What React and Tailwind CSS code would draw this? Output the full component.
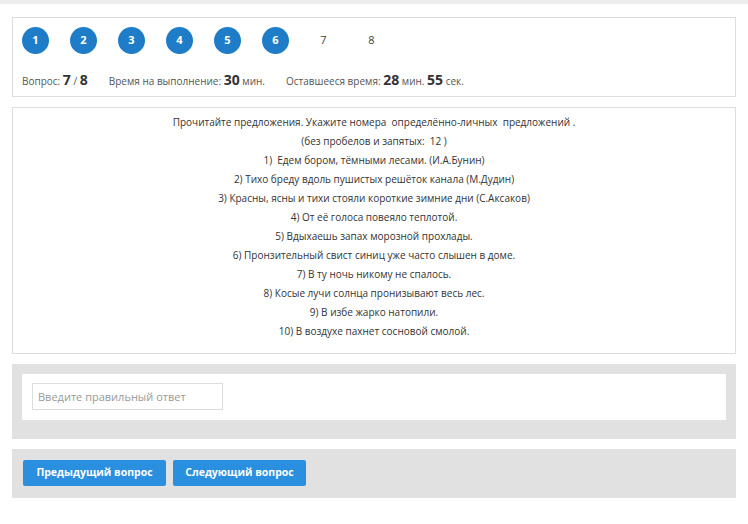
import React from "react";

const lines = [
  "Прочитайте предложения. Укажите номера  определённо-личных  предложений .",
  "(без пробелов и запятых:  12 )",
  "1)  Едем бором, тёмными лесами. (И.А.Бунин)",
  "2) Тихо бреду вдоль пушистых решёток канала (М.Дудин)",
  "3) Красны, ясны и тихи стояли короткие зимние дни (С.Аксаков)",
  "4) От её голоса повеяло теплотой.",
  "5) Вдыхаешь запах морозной прохлады.",
  "6) Пронзительный свист синиц уже часто слышен в доме.",
  "7) В ту ночь никому не спалось.",
  "8) Косые лучи солнца пронизывают весь лес.",
  "9) В избе жарко натопили.",
  "10) В воздухе пахнет сосновой смолой.",
];

function Step({ n, done }) {
  return (
    <div
      className={
        done
          ? "w-[27px] h-[27px] rounded-full bg-[#1f7cc6] text-white text-[11px] font-bold flex items-center justify-center"
          : "w-[27px] h-[27px] flex items-center justify-center text-[11px] text-[#444]"
      }
    >
      {n}
    </div>
  );
}

export default function App() {
  return (
    <div className="min-h-[524px] bg-white text-[#444]" style={{ fontFamily: "'Open Sans', 'Noto Sans', sans-serif" }}>
      <div className="h-[4px] bg-[#ececec]" />
      <div className="px-[12px] pt-[13px] flex flex-col">
        {/* progress */}
        <div className="border border-[#ddd] h-[80px] pl-[9px] pt-[9px]">
          <div className="flex gap-[21px]">
            {[1, 2, 3, 4, 5, 6, 7, 8].map((n) => (
              <Step key={n} n={n} done={n <= 6} />
            ))}
          </div>
          <div className="flex items-baseline mt-[15px] text-[10px] font-medium text-[#555]">
            <span>
              Вопрос: <b className="text-[14px] text-[#333]">7</b> / <b className="text-[14px] text-[#333]">8</b>
            </span>
            <span className="ml-[21px]">
              Время на выполнение: <b className="text-[14px] text-[#333]">30</b> мин.
            </span>
            <span className="ml-[21px]">
              Оставшееся время: <b className="text-[14px] text-[#333]">28</b> мин. <b className="text-[14px] text-[#333]">55</b> сек.
            </span>
          </div>
        </div>

        {/* question */}
        <div className="mt-[10px] border border-[#ddd] pt-[5px] pb-[12px] text-center text-[10px] font-medium leading-[19px] text-[#333]">
          {lines.map((l, i) => (
            <div key={i} className="whitespace-pre">{l}</div>
          ))}
        </div>

        {/* answer */}
        <div className="mt-[10px] bg-[#e1e1e1] px-[10px] pt-[10px] pb-[19px]">
          <div className="bg-white h-[46px] px-[10px] pt-[9px]">
            <input
              className="w-[191px] h-[27px] border border-[#ddd] px-[5px] text-[11px] outline-none placeholder:text-[#999]"
              placeholder="Введите правильный ответ"
            />
          </div>
        </div>

        {/* nav */}
        <div className="mt-[10px] bg-[#e1e1e1] pl-[11px] pt-[11px] pb-[12px] flex gap-[7px]">
          <button className="w-[143px] h-[26px] bg-[#2a8fdf] text-white text-[10.5px] font-bold rounded-[2px]">
            Предыдущий вопрос
          </button>
          <button className="w-[133px] h-[26px] bg-[#2a8fdf] text-white text-[10.5px] font-bold rounded-[2px]">
            Следующий вопрос
          </button>
        </div>
      </div>
    </div>
  );
}
